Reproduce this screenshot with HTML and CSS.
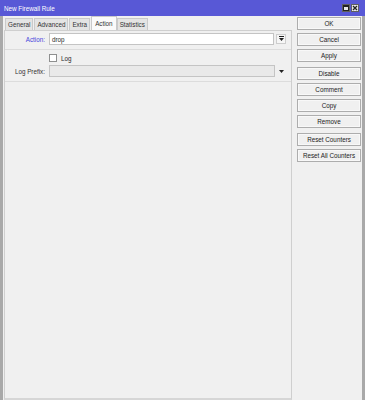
FILE: index.html
```html
<!DOCTYPE html>
<html lang="en">

<head>
    <meta charset="UTF-8" />
    <meta name="viewport" content="width=device-width, initial-scale=1.0" />
    <title>New Firewall Rule</title>
    <link rel="stylesheet" href="styles.css">
</head>

<body>
    <div class="window">
        <div class="titlebar">
            <span class="title">New Firewall Rule</span>
            <div class="controls">
                <span class="ctl">
                    <svg width="6" height="6" viewBox="0 0 6 6"><rect x="0.5" y="0.5" width="5" height="5" fill="none" stroke="#222" /><line x1="0" y1="1.5" x2="6" y2="1.5" stroke="#222" /></svg>
                </span>
                <span class="ctl">
                    <svg width="6" height="6" viewBox="0 0 6 6"><path d="M1 1 L5 5 M5 1 L1 5" stroke="#222" stroke-width="1.3" /></svg>
                </span>
            </div>
        </div>

        <div class="frame">
            <div class="main">
                <div class="tabs">
                    <div class="tab">General</div>
                    <div class="tab">Advanced</div>
                    <div class="tab">Extra</div>
                    <div class="tab active">Action</div>
                    <div class="tab">Statistics</div>
                </div>

                <div class="panel">
                    <div class="row first">
                        <label class="label blue">Action:</label>
                        <div class="input">drop</div>
                        <div class="drop-btn">
                            <svg width="5" height="6" viewBox="0 0 5 6"><line x1="0" y1="0.5" x2="5" y2="0.5" stroke="#222" /><path d="M0 2 L5 2 L2.5 5 Z" fill="#222" /></svg>
                        </div>
                    </div>
                    <div class="sep"></div>
                    <div class="check-row">
                        <span class="checkbox"></span>
                        <span class="check-text">Log</span>
                    </div>
                    <div class="row">
                        <label class="label">Log Prefix:</label>
                        <div class="input disabled"></div>
                        <div class="arrow">
                            <svg width="5" height="3" viewBox="0 0 5 3"><path d="M0 0 L5 0 L2.5 3 Z" fill="#222" /></svg>
                        </div>
                    </div>
                    <div class="sep"></div>
                </div>
            </div>

            <div class="side">
                <div class="group">
                    <button class="btn">OK</button>
                    <button class="btn">Cancel</button>
                    <button class="btn">Apply</button>
                </div>
                <div class="group">
                    <button class="btn">Disable</button>
                    <button class="btn">Comment</button>
                    <button class="btn">Copy</button>
                    <button class="btn">Remove</button>
                </div>
                <div class="group">
                    <button class="btn">Reset Counters</button>
                    <button class="btn">Reset All Counters</button>
                </div>
            </div>
        </div>
    </div>
</body>

</html>
```

FILE: styles.css
```css
body {
    margin: 0;
    font-family: "Liberation Sans", Arial, sans-serif;
    font-size: 6.3px;
    color: #2a2a2a;
    background: #f0f0f0;
}

.window {
    width: 365px;
    height: 400px;
    display: flex;
    flex-direction: column;
    overflow: hidden;
}

.titlebar {
    height: 16px;
    background: #5858d6;
    display: flex;
    align-items: center;
    justify-content: space-between;
    padding: 0 6px 0 4px;
    flex-shrink: 0;
}

.title {
    color: #fff;
}

.controls {
    display: flex;
    gap: 1px;
}

.ctl {
    width: 8px;
    height: 8px;
    background: #e8e8e8;
    border: 1px solid #606060;
    display: flex;
    align-items: center;
    justify-content: center;
    box-sizing: border-box;
}

.frame {
    flex: 1;
    display: flex;
    border-left: 3px solid #a9a9a9;
    border-right: 3px solid #a9a9a9;
    background: #f0f0f0;
}

.main {
    width: 288px;
    padding-left: 1px;
    display: flex;
    flex-direction: column;
}

.tabs {
    display: flex;
    height: 14px;
    align-items: flex-end;
    padding-left: 1px;
}

.tab {
    height: 12px;
    line-height: 12px;
    padding: 0 2px;
    background: #e4e4e4;
    border: 1px solid #cacaca;
    border-bottom: none;
    margin-right: 1px;
    box-sizing: border-box;
    color: #333;
}

.tab.active {
    height: 14px;
    line-height: 13px;
    background: #fafafa;
    padding: 0 3px;
    margin-right: 0;
}

.panel {
    flex: 1;
    border: 1px solid #cfcfcf;
    border-bottom: 2px solid #d6d6d6;
}

.row {
    display: flex;
    align-items: center;
    height: 12px;
    margin-top: 3px;
}

.row.first {
    margin-top: 2px;
}

.label {
    width: 40px;
    margin-right: 4px;
    text-align: right;
    color: #333;
}

.label.blue {
    color: #4646dc;
}

.input {
    width: 225px;
    height: 12px;
    line-height: 11px;
    padding-left: 2px;
    background: #fff;
    border: 1px solid #c4c4c4;
    box-sizing: border-box;
}

.input.disabled {
    width: 226px;
    background: #e9e9e9;
}

.drop-btn {
    width: 10px;
    height: 10px;
    margin-left: 2px;
    background: #f6f6f6;
    border: 1px solid #cdcdcd;
    box-sizing: border-box;
    display: flex;
    align-items: center;
    justify-content: center;
}

.arrow {
    margin-left: 4px;
    display: flex;
    align-items: center;
}

.sep {
    height: 1px;
    margin: 4px 0 0;
    background: #dcdcdc;
}

.check-row {
    display: flex;
    align-items: center;
    height: 8px;
    margin: 4px 0 0 44px;
}

.checkbox {
    width: 8px;
    height: 8px;
    border: 1px solid #8e8f8f;
    background: #fff;
    box-sizing: border-box;
    margin-right: 4px;
}

.side {
    flex: 1;
    display: flex;
    flex-direction: column;
    gap: 5px;
    padding: 1px 1px 0 5px;
}

.group {
    display: flex;
    flex-direction: column;
    gap: 3px;
}

.btn {
    height: 13px;
    padding: 0;
    font-family: inherit;
    font-size: 6.3px;
    color: #222;
    background: #f0f0f0;
    border: 1px solid #adadad;
    box-shadow: inset 0 0 0 1px #f8f8f8;
}
```
